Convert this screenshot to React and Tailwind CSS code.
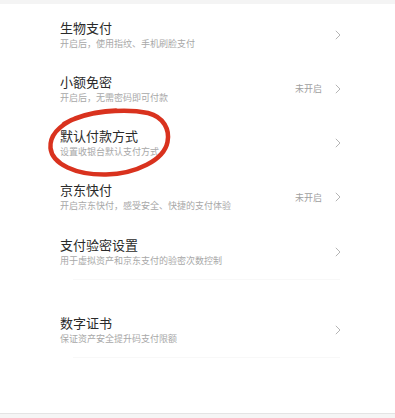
import React from "react";

const rows = [
  { title: "生物支付", desc: "开启后，使用指纹、手机刷脸支付" },
  { title: "小额免密", desc: "开启后，无需密码即可付款", status: "未开启" },
  { title: "默认付款方式", desc: "设置收银台默认支付方式" },
  { title: "京东快付", desc: "开启京东快付，感受安全、快捷的支付体验", status: "未开启" },
  { title: "支付验密设置", desc: "用于虚拟资产和京东支付的验密次数控制" },
];

function Chevron() {
  return (
    <svg width="6" height="10" viewBox="0 0 6 10" className="shrink-0">
      <polyline points="0.8,0.8 5,5 0.8,9.2" fill="none" stroke="#b5b5b5" strokeWidth="1" />
    </svg>
  );
}

function Row({ title, desc, status }) {
  return (
    <div className="h-[54.25px] flex items-center pl-[60px] pr-[54px]">
      <div className="flex-1 flex flex-col">
        <span className="text-[13px] leading-[16px] text-[#2a2a2a]">{title}</span>
        <span className="text-[9px] leading-[13px] text-[#a8a8a8] mt-[1px]">{desc}</span>
      </div>
      {status && <span className="text-[9px] text-[#a0a0a0] mr-[13px]">{status}</span>}
      <Chevron />
    </div>
  );
}

export default function App() {
  return (
    <div
      className="relative w-[395px] h-[418px] bg-white flex flex-col overflow-hidden"
      style={{ fontFamily: '"Noto Sans CJK SC", "Noto Sans", sans-serif' }}
    >
      <div className="h-[4px] bg-[#f4f4f4]"></div>
      <div className="pt-[3.5px]">
        {rows.map((r) => (
          <Row key={r.title} {...r} />
        ))}
      </div>
      <div className="ml-[73px] mr-[55px] h-[1px] bg-[#f8f8f8]"></div>
      <div className="h-[23px]"></div>
      <Row title="数字证书" desc="保证资产安全提升码支付限额" />
      <div className="ml-[73px] mr-[55px] h-[1px] bg-[#f8f8f8]"></div>
      <div className="flex-1"></div>
      <div className="h-[5px] border-t border-[#e4e4e4] bg-[#f5f5f5]"></div>

      {/* red hand-drawn circle over 默认付款方式 */}
      <svg
        className="absolute left-[40px] top-[104px] pointer-events-none"
        width="140"
        height="80"
        viewBox="0 0 140 80"
      >
        <path
          d="M24 20 C 45 7, 85 4, 108 9 C 124 13, 130 26, 127.5 38 C 124 56, 96 70, 66 70.5 C 36 71, 12 60, 10.5 44 C 9.5 32, 18 22, 36 14 C 50 9, 62 7, 76 6.5"
          fill="none"
          stroke="#d9321e"
          strokeWidth="4.5"
          strokeLinecap="round"
        />
      </svg>
    </div>
  );
}
